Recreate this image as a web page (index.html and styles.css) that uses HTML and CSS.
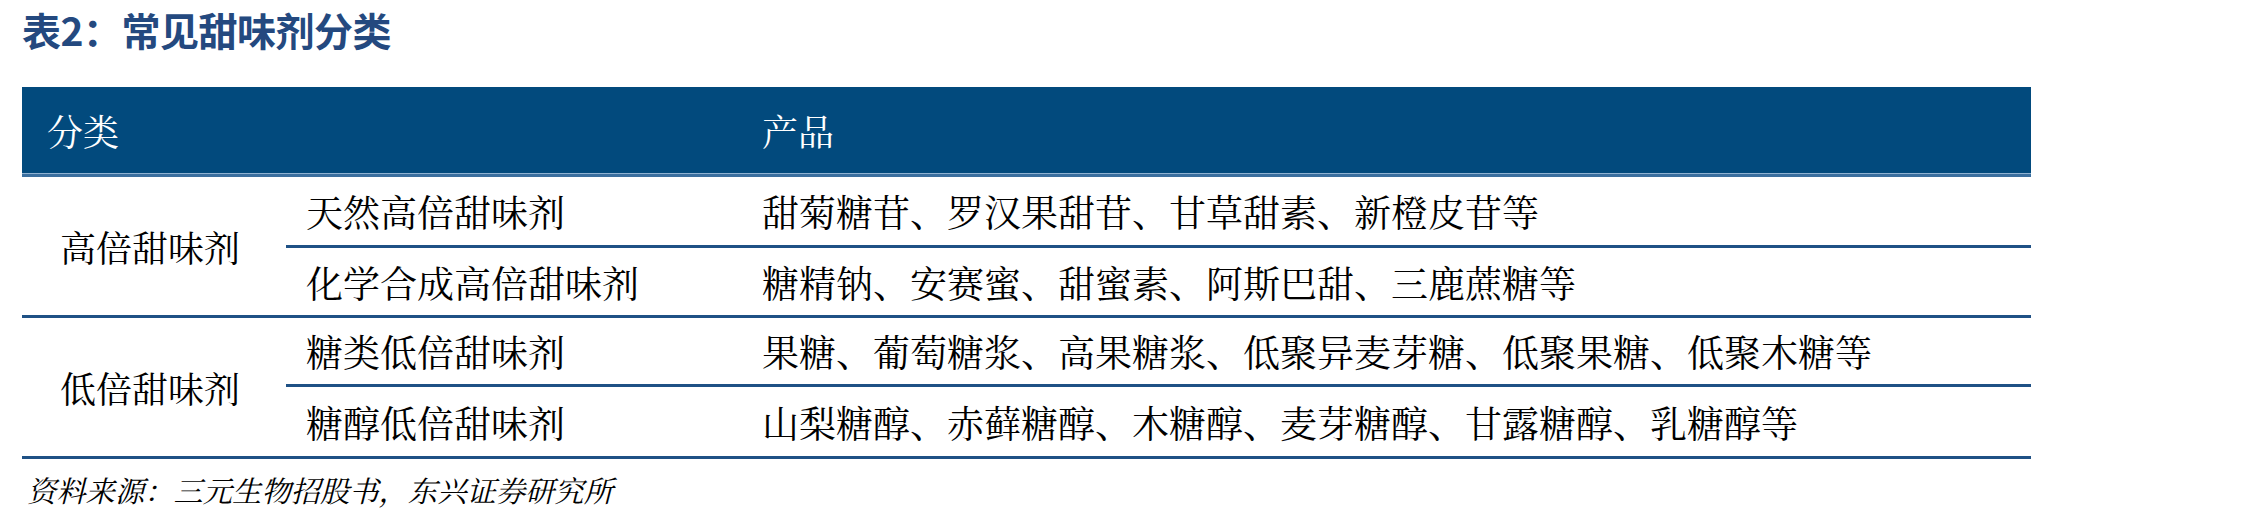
FILE: index.html
```html
<!DOCTYPE html>
<html lang="zh-CN">
<head>
<meta charset="utf-8">
<title>常见甜味剂分类</title>
<link rel="stylesheet" href="styles.css">
</head>
<body>
<div class="page">
  <h1 class="title">表2：常见甜味剂分类</h1>
  <div class="table">
    <div class="th th-cat">分类</div>
    <div class="th th-prod">产品</div>

    <div class="group g1">高倍甜味剂</div>
    <div class="sub r1">天然高倍甜味剂</div>
    <div class="prod r1">甜菊糖苷、罗汉果甜苷、甘草甜素、新橙皮苷等</div>
    <div class="sub r2">化学合成高倍甜味剂</div>
    <div class="prod r2">糖精钠、安赛蜜、甜蜜素、阿斯巴甜、三鹿蔗糖等</div>

    <div class="group g2">低倍甜味剂</div>
    <div class="sub r3">糖类低倍甜味剂</div>
    <div class="prod r3">果糖、葡萄糖浆、高果糖浆、低聚异麦芽糖、低聚果糖、低聚木糖等</div>
    <div class="sub r4">糖醇低倍甜味剂</div>
    <div class="prod r4">山梨糖醇、赤藓糖醇、木糖醇、麦芽糖醇、甘露糖醇、乳糖醇等</div>
  </div>
  <p class="source">资料来源：三元生物招股书，东兴证券研究所</p>
</div>
</body>
</html>
```

FILE: styles.css
```css
html, body {
  margin: 0;
  padding: 0;
  background: #ffffff;
}

.page {
  width: 2268px;
  height: 524px;
  padding-left: 22px;
  box-sizing: border-box;
  font-family: "Noto Serif CJK SC", "Noto Sans CJK SC", serif;
  color: #000;
}

.title {
  margin: 0;
  height: 58px;
  line-height: 58px;
  font-family: "Noto Sans CJK SC", "Liberation Sans", sans-serif;
  font-weight: 700;
  font-size: 39px;
  color: #24497f;
  letter-spacing: -0.5px;
}

.table {
  margin-top: 29px;
  width: 2009px;
  display: grid;
  grid-template-columns: 264px 454px 1fr;
  grid-template-rows: 90px 71px 70px 69px 72px;
  font-size: 37px;
}

.th {
  background: #024a7d;
  color: #ffffff;
  display: flex;
  align-items: center;
  border-bottom: 3px solid #3b6f9f;
  box-shadow: inset 0 -1px 0 #8fb2d2;
  font-size: 36px;
}

.th-cat {
  grid-column: 1 / 3;
  padding-left: 25px;
}

.th-prod {
  padding-left: 22px;
}

.group, .sub, .prod {
  display: flex;
  align-items: center;
  border-bottom: 3px solid #1f5185;
}

.group {
  grid-column: 1;
  justify-content: center;
  padding-right: 8px;
  font-size: 36px;
}

.g1 { grid-row: 2 / 4; }
.g2 { grid-row: 4 / 6; }

.sub {
  grid-column: 2;
  padding-left: 20px;
}

.prod {
  grid-column: 3;
  padding-left: 22px;
}

.r1 { grid-row: 2; }
.r2 { grid-row: 3; }
.r3 { grid-row: 4; }
.r4 { grid-row: 5; }

.source {
  margin: 4px 0 0 5px;
  font-size: 29.3px;
  font-style: italic;
  line-height: 52px;
  color: #000;
}
```
